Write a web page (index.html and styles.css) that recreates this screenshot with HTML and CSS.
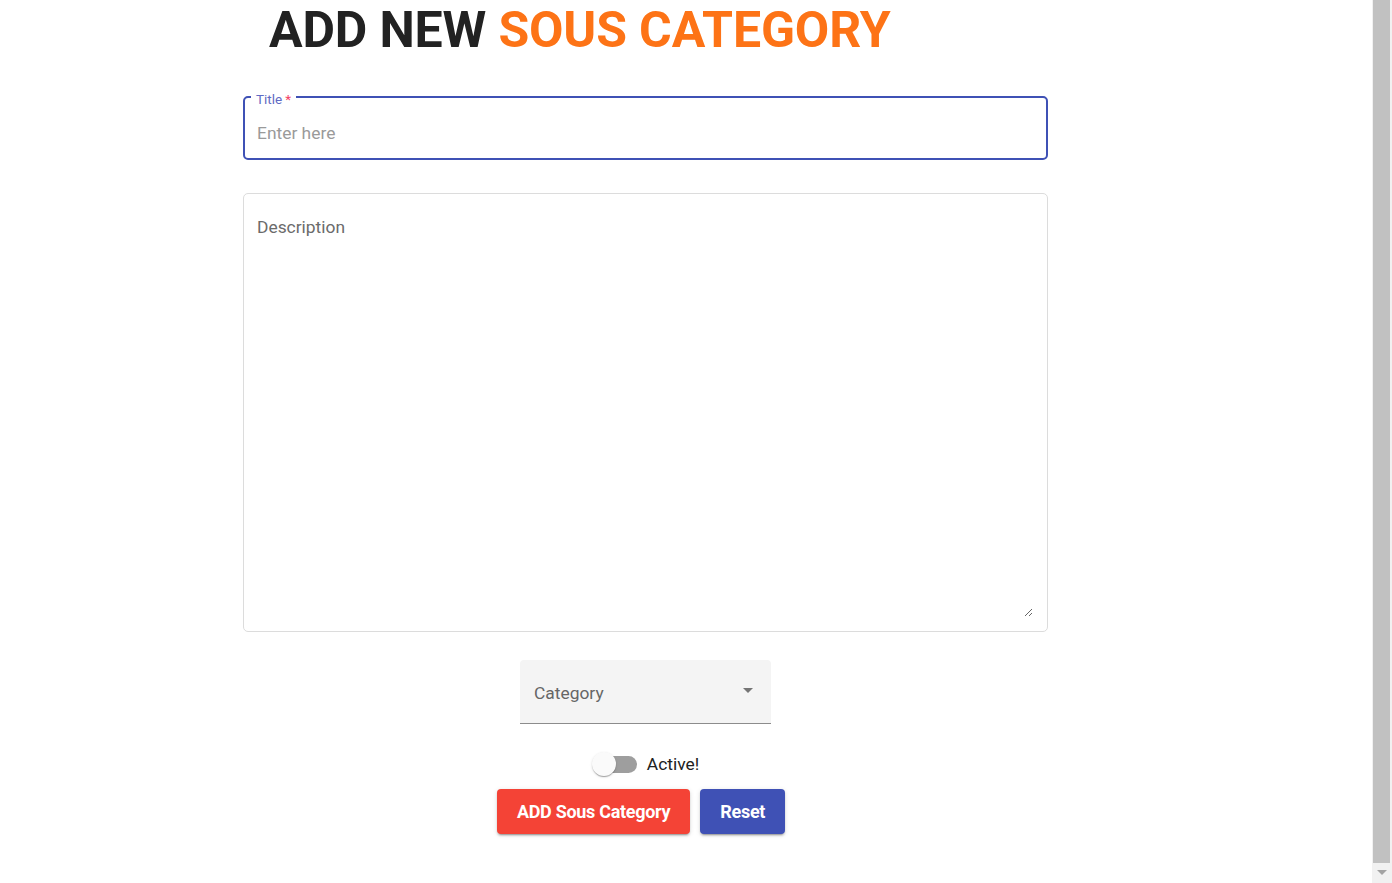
FILE: index.html
```html
<!DOCTYPE html>
<html lang="en">
<head>
<meta charset="utf-8">
<title>Add new sous category</title>
<link rel="stylesheet" href="styles.css">
</head>
<body>
<div class="viewport">
  <div class="page">
    <h1 class="heading">ADD NEW <span class="accent">SOUS CATEGORY</span></h1>
    <form class="form">
      <fieldset class="outlined">
        <legend class="outlined-label">Title<span class="req">*</span></legend>
        <input class="outlined-input" type="text" placeholder="Enter here">
      </fieldset>
      <div class="desc-box">
        <textarea class="desc" placeholder="Description"></textarea>
      </div>
      <div class="select-row">
        <div class="select">
          <span class="select-label">Category</span>
          <span class="select-arrow"></span>
        </div>
      </div>
      <div class="switch-row">
        <span class="switch">
          <span class="switch-track"></span>
          <span class="switch-thumb"></span>
        </span>
        <span class="switch-text">Active!</span>
      </div>
      <div class="buttons">
        <button type="button" class="btn btn-red">ADD Sous Category</button>
        <button type="button" class="btn btn-blue">Reset</button>
      </div>
    </form>
  </div>
  <div class="scrollbar">
    <div class="scroll-thumb"></div>
    <div class="scroll-btn"><span class="scroll-arrow"></span></div>
  </div>
</div>
</body>
</html>
```
FILE: styles.css
```css
html, body {
  margin: 0;
  height: 883px;
  overflow: hidden;
}
body {
  font-family: Roboto, "Liberation Sans", sans-serif;
  background: #fff;
  color: #212121;
}
.viewport {
  display: flex;
  height: 883px;
}
.page {
  flex: 1;
  min-width: 0;
}
.scrollbar {
  width: 20px;
  flex: 0 0 20px;
  height: 883px;
  background: #f1f1f1;
  display: flex;
  flex-direction: column;
}
.scroll-thumb {
  flex: 0 0 863px;
  margin: 0 2px 0 1px;
  background: #c1c1c1;
}
.scroll-btn {
  flex: 1;
  display: flex;
  justify-content: center;
  align-items: flex-start;
  padding-top: 7px;
  padding-right: 1px;
}
.scroll-arrow {
  width: 0;
  height: 0;
  border-left: 5px solid transparent;
  border-right: 5px solid transparent;
  border-top: 5px solid #a3a3a3;
}

.form, .heading {
  width: 805px;
  margin-left: 243px;
  box-sizing: border-box;
}
.heading {
  margin-top: 0;
  margin-bottom: 0;
  padding-top: 1px;
  padding-left: 26px;
  font-size: 50px;
  line-height: 58px;
  font-weight: 700;
  color: #222;
  letter-spacing: -0.15px;
  white-space: nowrap;
}
.accent {
  color: #fd7316;
}
.form {
  margin-top: 29px;
  display: flex;
  flex-direction: column;
}
.outlined {
  margin: 0;
  padding: 16px 6px 15px 6px;
  border: 2px solid #3f51b5;
  border-radius: 5px;
  min-width: 0;
}
.outlined-label {
  padding: 4px 5px 0 5px;
  margin-left: 0;
  font-size: 13.5px;
  line-height: 14px;
  color: #5f6bc4;
}
.req {
  color: #f44366;
  margin-left: 3px;
}
.outlined-input {
  display: block;
  width: 100%;
  box-sizing: border-box;
  border: 0;
  outline: 0;
  padding: 0 6px;
  height: 21px;
  font-family: Roboto, "Liberation Sans", sans-serif;
  font-size: 17.4px;
  color: #212121;
  background: transparent;
}
.outlined-input::placeholder {
  color: #9a9a9a;
}
.desc-box {
  margin-top: 33px;
  height: 439px;
  box-sizing: border-box;
  padding: 23px 14px 14px 13px;
  border: 1px solid #dcdcdc;
  border-radius: 5px;
  display: flex;
}
.desc {
  flex: 1;
  display: block;
  margin: 0;
  padding: 0;
  border: 0;
  font-family: Roboto, "Liberation Sans", sans-serif;
  font-size: 17.4px;
  line-height: 21px;
  color: #212121;
  outline: none;
  background: transparent;
}
.desc::placeholder {
  color: #6b6b6b;
}
.select-row {
  display: flex;
  justify-content: center;
  margin-top: 28px;
}
.select {
  width: 251px;
  height: 64px;
  box-sizing: border-box;
  background: #f4f4f4;
  border-radius: 4px 4px 0 0;
  border-bottom: 1px solid #8c8c8c;
  display: flex;
  align-items: center;
  justify-content: space-between;
  padding: 3px 18px 0 14px;
}
.select-label {
  font-size: 17.4px;
  color: #666;
}
.select-arrow {
  width: 0;
  height: 0;
  border-left: 5.5px solid transparent;
  border-right: 5.5px solid transparent;
  border-top: 5px solid #757575;
  margin-top: -5px;
}
.switch-row {
  display: flex;
  justify-content: center;
  align-items: center;
  margin-top: 28px;
  gap: 10px;
}
.switch {
  position: relative;
  width: 45px;
  height: 24px;
  display: flex;
  align-items: center;
  justify-content: flex-end;
}
.switch-track {
  width: 38px;
  height: 17px;
  border-radius: 9px;
  background: #9e9e9e;
}
.switch-thumb {
  position: absolute;
  left: 0;
  top: 0;
  width: 24px;
  height: 24px;
  border-radius: 50%;
  background: #fafafa;
  box-shadow: 0 2px 1px -1px rgba(0,0,0,.2), 0 1px 1px 0 rgba(0,0,0,.14), 0 1px 3px 0 rgba(0,0,0,.12);
}
.switch-text {
  font-size: 17.4px;
  color: #212121;
}
.buttons {
  display: flex;
  justify-content: center;
  gap: 10px;
  margin-top: 13px;
  padding-right: 9px;
}
.btn {
  height: 45px;
  border: 0;
  border-radius: 4px;
  padding: 0 20px;
  font-family: Roboto, "Liberation Sans", sans-serif;
  font-size: 18px;
  font-weight: 700;
  color: #fff;
  letter-spacing: -0.3px;
  box-shadow: 0 3px 1px -2px rgba(0,0,0,.2), 0 2px 2px 0 rgba(0,0,0,.14), 0 1px 5px 0 rgba(0,0,0,.12);
  cursor: pointer;
}
.btn-red {
  background: #f44336;
}
.btn-blue {
  background: #3f51b5;
}
```
